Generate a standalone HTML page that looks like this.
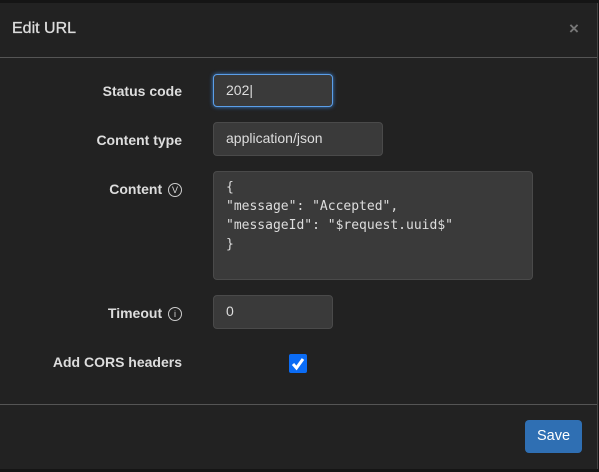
<!DOCTYPE html>
<html><head><style>
body{margin:0;width:599px;height:472px;background:#151515;font-family:"Liberation Sans",sans-serif;overflow:hidden;position:relative}
.m{position:absolute;left:0;top:3px;width:597px;height:466px;background:#222;border-right:1px solid #444}
.t{position:absolute;left:12px;top:17px;font-size:16px;color:#ddd;-webkit-text-stroke:0.3px #ddd}
.x{position:absolute;left:569px;top:16px;font-size:17px;color:#777;font-weight:bold}
.hr{position:absolute;left:0;width:597px;height:1px;background:#555}
.l{position:absolute;right:415px;font-size:14px;font-weight:bold;color:#ddd;text-align:right}
.i{position:absolute;left:213px;background:#3a3a3a;border:1px solid #4a4a4a;border-radius:4px;box-sizing:border-box;color:#ddd;font-size:14px;padding:0 12px;line-height:31px}
.c{font-family:"DejaVu Sans Mono",monospace;font-size:13px;line-height:19px;padding:6px 12px;white-space:pre}
.ic{display:inline-block;width:12px;height:12px;border:1px solid #ccc;border-radius:50%;font-size:9px;line-height:12px;text-align:center;font-weight:normal;vertical-align:1px;margin-left:2px}
</style></head><body>
<div class="m">
<div class="t">Edit URL</div><div class="x">×</div>
<div class="hr" style="top:54px"></div>
<div class="l" style="top:80px">Status code</div>
<div class="i" style="top:71px;width:120px;height:33px;border-color:#5b9ee8;box-shadow:0 0 4px #3b7fd0">202|</div>
<div class="l" style="top:129px">Content type</div>
<div class="i" style="top:119px;width:170px;height:34px">application/json</div>
<div class="l" style="top:178px">Content <span class="ic">V</span></div>
<div class="i c" style="top:168px;width:320px;height:109px">{
"message": "Accepted",
"messageId": "$request.uuid$"
}</div>
<div class="l" style="top:302px">Timeout <span class="ic">i</span></div>
<div class="i" style="top:292px;width:120px;height:34px">0</div>
<div class="l" style="top:351px">Add CORS headers</div>
<div style="position:absolute;left:289px;top:351px;width:18px;height:19px;background:#0b6cf5;border-radius:2px"><svg width="18" height="19"><path d="M4 10l3.5 4L14 5" stroke="#fff" stroke-width="3" fill="none"/></svg></div>
<div class="hr" style="top:401px"></div>
<div style="position:absolute;left:525px;top:417px;width:57px;height:33px;background:#2f6fb3;border-radius:4px;color:#fff;font-size:14.5px;line-height:33px;text-align:center">Save</div>
</div>
</body></html>
